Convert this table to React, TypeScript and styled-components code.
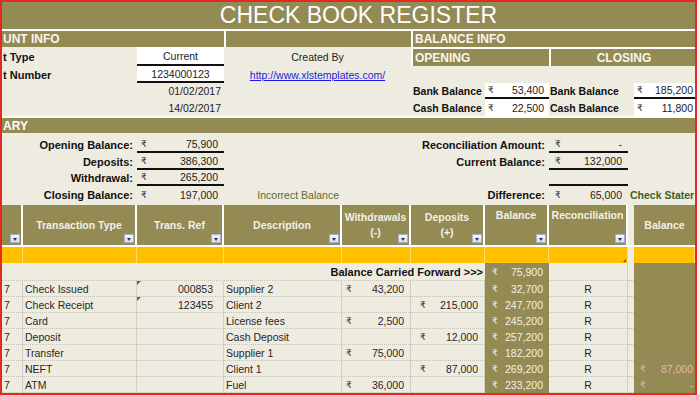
import React from 'react';
import styled, { createGlobalStyle } from 'styled-components';

const OLIVE = '#948A54';
const PAPER = '#EEECE1';
const CREAM = '#F3F1E7';
const RULE = '#D2CFC2';
const COLS = '21px 114px 87px 118px 69px 74px 64px 79px 6px 61px';

const GlobalStyle = createGlobalStyle`
  html, body { margin: 0; padding: 0; background: #F4F3EE; }
  body { font-family: 'Liberation Sans', 'DejaVu Sans', Arial, sans-serif; }
`;

const Sheet = styled.div`
    width: 697px;
    height: 395px;
    box-sizing: border-box;
    border: 2px solid #E22A23;
    background: #fff;
    overflow: hidden;
    display: flex;
    flex-direction: column;
`;

const TitleBar = styled.div`
    flex: none;
    height: 27px;
    background: ${OLIVE};
    color: #fff;
    font-size: 23px;
    display: flex;
    align-items: center;
    justify-content: center;
    padding-left: 20px;
`;

const Block = styled.div<{ $rows: string; $gapTop?: number; $bg?: string; $padY?: string }>`
    flex: none;
    display: grid;
    grid-template-columns: ${COLS};
    grid-template-rows: ${p => p.$rows};
    margin-top: ${p => p.$gapTop ?? 0}px;
    padding: ${p => p.$padY ?? '0'};
    background: ${p => p.$bg ?? PAPER};
`;

const SectionBand = styled.div`
    flex: none;
    height: 15px;
    margin-top: 2px;
    background: ${OLIVE};
    color: #fff;
    font-size: 12px;
    font-weight: bold;
    display: flex;
    align-items: center;
    padding-left: 1px;
`;

const Cell = styled.div<{ $span?: number }>`
    grid-column: span ${p => p.$span ?? 1};
    min-width: 0;
    box-sizing: border-box;
    display: flex;
    align-items: center;
    white-space: nowrap;
    overflow: hidden;
`;

const Band = styled(Cell)<{ $center?: boolean; $sepLeft?: boolean; $sepTop?: boolean }>`
    background: ${OLIVE};
    color: #F8F6EF;
    font-size: 12px;
    font-weight: bold;
    justify-content: ${p => (p.$center ? 'center' : 'flex-start')};
    padding-left: ${p => (p.$sepLeft ? '2px' : '1px')};
    border-left: ${p => (p.$sepLeft ? '2px solid #fff' : 'none')};
    border-top: ${p => (p.$sepTop ? '2px solid #fff' : 'none')};
`;

const FieldLabel = styled(Cell)<{ $right?: boolean; $size?: number; $pl?: number }>`
    justify-content: ${p => (p.$right ? 'flex-end' : 'flex-start')};
    padding: 0 ${p => (p.$right ? '4px' : '0')} 0 ${p => p.$pl ?? 1}px;
    font-weight: bold;
    font-size: ${p => p.$size ?? 11}px;
    color: #111;
`;

const FieldValue = styled(Cell)<{ $center?: boolean; $white?: boolean; $rule?: boolean }>`
    justify-content: ${p => (p.$center ? 'center' : 'flex-end')};
    padding: 0 3px;
    background: ${p => (p.$white ? '#fff' : 'transparent')};
    border-bottom: ${p => (p.$rule ? '2px solid #111' : 'none')};
    font-size: 10.5px;
    color: #222;
`;

const Money = styled(Cell)<{ $white?: boolean; $rule?: boolean; $pl?: number; $pr?: number }>`
    justify-content: space-between;
    padding: 0 ${p => p.$pr ?? 5}px 0 ${p => p.$pl ?? 4}px;
    background: ${p => (p.$white ? '#fff' : 'transparent')};
    border-bottom: ${p => (p.$rule ? '2px solid #111' : 'none')};
    font-size: 10.5px;
    color: #222;
`;

const Rupee = styled.span`
    font-family: 'DejaVu Sans', sans-serif;
    font-size: 9px;
`;

const Credit = styled(Cell)`
    justify-content: center;
    font-size: 10.5px;
    color: #222;
`;

const SiteLink = styled.a`
    color: #1A1AE6;
    text-decoration: underline;
`;

const Note = styled(Cell)<{ $strong?: boolean; $right?: boolean }>`
    justify-content: ${p => (p.$right ? 'flex-end' : 'flex-start')};
    padding: 0 3px 0 ${p => (p.$strong ? 2 : 4)}px;
    font-size: 10.5px;
    font-weight: ${p => (p.$strong ? 'bold' : 'normal')};
    color: ${p => (p.$strong ? '#3F5F22' : '#5A6B2E')};
`;

const HeadCell = styled(Cell)<{ $top?: boolean; $blank?: boolean; $last?: boolean }>`
    position: relative;
    flex-direction: column;
    justify-content: ${p => (p.$top ? 'flex-start' : 'center')};
    padding-top: ${p => (p.$top ? '3px' : '0')};
    background: ${p => (p.$blank ? PAPER : OLIVE)};
    border-right: ${p => (p.$last || p.$blank ? 'none' : '2px solid #fff')};
    color: ${CREAM};
    font-size: 10.5px;
    font-weight: bold;
    line-height: 15px;
    text-align: center;
`;

const Filter = styled.span`
    position: absolute;
    right: 1px;
    bottom: 2px;
    width: 10px;
    height: 9px;
    box-sizing: border-box;
    border: 1px solid #A8B0C8;
    background: linear-gradient(#F6F7FB, #D8DDEB);

    &::after {
        content: '';
        position: absolute;
        left: 2px;
        top: 3px;
        border-left: 2.5px solid transparent;
        border-right: 2.5px solid transparent;
        border-top: 3px solid #24315E;
    }
`;

const StripeCell = styled(Cell)<{ $blank?: boolean; $handle?: boolean }>`
    position: relative;
    background: ${p => (p.$blank ? PAPER : '#FFC000')};
    border-right: ${p => (p.$blank ? 'none' : '1px solid rgba(255,255,255,0.45)')};

    &::after {
        content: '';
        display: ${p => (p.$handle ? 'block' : 'none')};
        position: absolute;
        right: 1px;
        bottom: 1px;
        border-left: 3px solid transparent;
        border-bottom: 3px solid #5B5030;
    }
`;

const GridCell = styled(Cell)<{ $align?: 'left' | 'center' | 'right'; $pr?: number; $flag?: boolean; $open?: boolean }>`
    position: relative;
    justify-content: ${p => (p.$align === 'right' ? 'flex-end' : p.$align === 'center' ? 'center' : 'flex-start')};
    padding: 0 ${p => p.$pr ?? 2}px 0 2px;
    border-right: ${p => (p.$open ? 'none' : `1px solid ${RULE}`)};
    border-bottom: 1px dotted #C6C3B5;
    font-size: 10.5px;
    color: #262626;

    &::before {
        content: '';
        display: ${p => (p.$flag ? 'block' : 'none')};
        position: absolute;
        left: 0;
        top: 0;
        border-top: 4px solid #1E8C2E;
        border-right: 4px solid transparent;
    }
`;

const CarryLabel = styled(GridCell)`
    font-weight: bold;
    font-size: 11px;
    color: #111;
`;

const AmountCell = styled(GridCell)<{ $pl: number }>`
    justify-content: space-between;
    padding-left: ${p => p.$pl}px;
`;

const OliveCell = styled(Cell)<{ $pink?: boolean; $pl?: number }>`
    background: ${OLIVE};
    justify-content: space-between;
    padding: 0 ${p => (p.$pink ? 2 : 6)}px 0 ${p => p.$pl ?? 7}px;
    font-size: 10.5px;
    color: ${p => (p.$pink ? '#E8B4B2' : CREAM)};
`;

type Txn = {
    type: string;
    ref: string;
    desc: string;
    out: string;
    dep: string;
    bal: string;
    stmt?: string;
};

const txns: Txn[] = [
    { type: 'Check Issued', ref: '000853', desc: 'Supplier 2', out: '43,200', dep: '', bal: '32,700' },
    { type: 'Check Receipt', ref: '123455', desc: 'Client 2', out: '', dep: '215,000', bal: '247,700' },
    { type: 'Card', ref: '', desc: 'License fees', out: '2,500', dep: '', bal: '245,200' },
    { type: 'Deposit', ref: '', desc: 'Cash Deposit', out: '', dep: '12,000', bal: '257,200' },
    { type: 'Transfer', ref: '', desc: 'Supplier 1', out: '75,000', dep: '', bal: '182,200' },
    { type: 'NEFT', ref: '', desc: 'Client 1', out: '', dep: '87,000', bal: '269,200', stmt: '87,000' },
    { type: 'ATM', ref: '', desc: 'Fuel', out: '36,000', dep: '', bal: '233,200', stmt: '-' },
];

function Amount({ value }: { value: string }) {
    if (!value) return null;
    return (
        <>
            <Rupee>₹</Rupee>
            <span>{value}</span>
        </>
    );
}

export default function App() {
    return (
        <Sheet>
            <GlobalStyle />
            <TitleBar>CHECK BOOK REGISTER</TitleBar>

            <Block $gapTop={2} $rows="16px 19px 17px 16px 17px">
                <Band $span={3}>UNT INFO</Band>
                <Band $span={2} $sepLeft />
                <Band $span={5} $sepLeft>BALANCE INFO</Band>

                <FieldLabel $span={2}>t Type</FieldLabel>
                <FieldValue $center $white $rule>Current</FieldValue>
                <Credit $span={2}>Created By</Credit>
                <Band $span={2} $sepLeft $sepTop>OPENING</Band>
                <Band $span={3} $sepLeft $sepTop $center>CLOSING</Band>

                <FieldLabel $span={2}>t Number</FieldLabel>
                <FieldValue $center $white $rule>1234000123</FieldValue>
                <Credit $span={2}>
                    <SiteLink href="#">http://www.xlstemplates.com/</SiteLink>
                </Credit>
                <Cell $span={5} />

                <Cell $span={2} />
                <FieldValue>01/02/2017</FieldValue>
                <Cell $span={2} />
                <FieldLabel $size={10.5} $pl={2}>Bank Balance</FieldLabel>
                <Money $white $rule $pl={3} $pr={5}><Amount value="53,400" /></Money>
                <FieldLabel $size={10.5}>Bank Balance</FieldLabel>
                <Cell />
                <Money $white $rule $pl={3} $pr={2}><Amount value="185,200" /></Money>

                <Cell $span={2} />
                <FieldValue>14/02/2017</FieldValue>
                <Cell $span={2} />
                <FieldLabel $size={10.5} $pl={2}>Cash Balance</FieldLabel>
                <Money $white $pl={3} $pr={5}><Amount value="22,500" /></Money>
                <FieldLabel $size={10.5}>Cash Balance</FieldLabel>
                <Cell />
                <Money $white $pl={3} $pr={2}><Amount value="11,800" /></Money>
            </Block>

            <SectionBand>ARY</SectionBand>

            <Block $rows="16px 17px 16px 17px" $padY="4px 0 2px">
                <FieldLabel $span={2} $right>Opening Balance:</FieldLabel>
                <Money $rule $pl={4} $pr={6}><Amount value="75,900" /></Money>
                <FieldLabel $span={4} $right>Reconciliation Amount:</FieldLabel>
                <Money $rule $pl={6} $pr={6}><Amount value="-" /></Money>
                <Cell $span={2} />

                <FieldLabel $span={2} $right>Deposits:</FieldLabel>
                <Money $rule $pl={4} $pr={6}><Amount value="386,300" /></Money>
                <FieldLabel $span={4} $right>Current Balance:</FieldLabel>
                <Money $rule $pl={6} $pr={6}><Amount value="132,000" /></Money>
                <Cell $span={2} />

                <FieldLabel $span={2} $right>Withdrawal:</FieldLabel>
                <Money $rule $pl={4} $pr={6}><Amount value="265,200" /></Money>
                <Cell $span={4} />
                <Money $rule />
                <Cell $span={2} />

                <FieldLabel $span={2} $right>Closing Balance:</FieldLabel>
                <Money $pl={4} $pr={6}><Amount value="197,000" /></Money>
                <Note $right>Incorrect Balance</Note>
                <FieldLabel $span={3} $right>Difference:</FieldLabel>
                <Money $pl={6} $pr={6}><Amount value="65,000" /></Money>
                <Note $span={2} $strong>Check Stater</Note>
            </Block>

            <Block $rows="40px" $bg="#fff">
                <HeadCell><Filter /></HeadCell>
                <HeadCell>Transaction Type<Filter /></HeadCell>
                <HeadCell>Trans. Ref<Filter /></HeadCell>
                <HeadCell>Description<Filter /></HeadCell>
                <HeadCell><span>Withdrawals</span><span>(-)</span><Filter /></HeadCell>
                <HeadCell><span>Deposits</span><span>(+)</span><Filter /></HeadCell>
                <HeadCell $top>Balance<Filter /></HeadCell>
                <HeadCell $top>Reconciliation<Filter /></HeadCell>
                <HeadCell $blank />
                <HeadCell $last>Balance</HeadCell>
            </Block>

            <Block $gapTop={2} $rows="16px">
                <StripeCell />
                <StripeCell />
                <StripeCell />
                <StripeCell />
                <StripeCell />
                <StripeCell />
                <StripeCell />
                <StripeCell $handle />
                <StripeCell $blank />
                <StripeCell />
            </Block>

            <Block $rows="18px repeat(7, 16px)">
                <CarryLabel $span={6} $align="right" $open>Balance Carried Forward &gt;&gt;&gt;</CarryLabel>
                <OliveCell><Amount value="75,900" /></OliveCell>
                <GridCell />
                <GridCell $open />
                <OliveCell $pink />

                {txns.map(t => (
                    <React.Fragment key={t.type}>
                        <GridCell>7</GridCell>
                        <GridCell>{t.type}</GridCell>
                        <GridCell $align="right" $pr={10} $flag={!!t.ref}>{t.ref}</GridCell>
                        <GridCell>{t.desc}</GridCell>
                        <AmountCell $pl={4} $pr={6}><Amount value={t.out} /></AmountCell>
                        <AmountCell $pl={9} $pr={6}><Amount value={t.dep} /></AmountCell>
                        <OliveCell><Amount value={t.bal} /></OliveCell>
                        <GridCell $align="center">R</GridCell>
                        <GridCell $open />
                        <OliveCell $pink $pl={6}>{t.stmt && <Amount value={t.stmt} />}</OliveCell>
                    </React.Fragment>
                ))}
            </Block>
        </Sheet>
    );
}
